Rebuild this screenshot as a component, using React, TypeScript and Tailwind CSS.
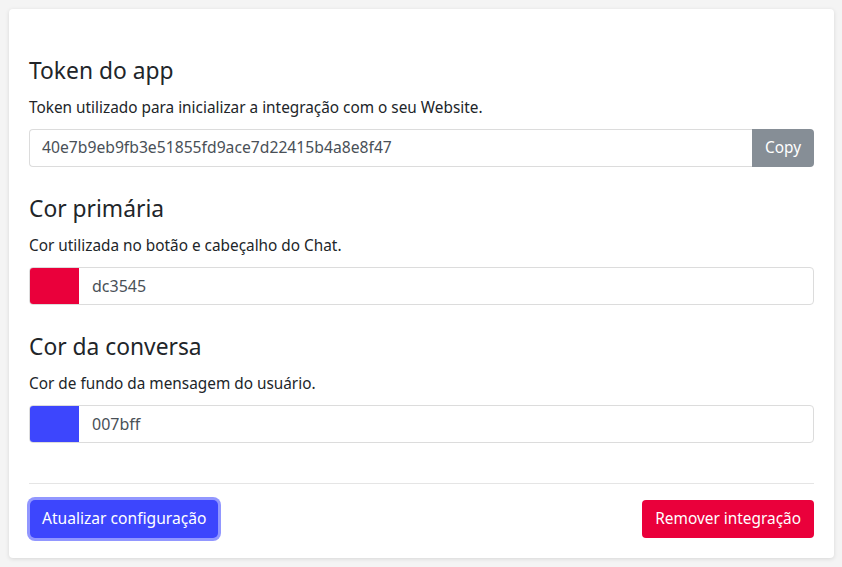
import React from "react";

const font = { fontFamily: '"Noto Sans", "Open Sans", sans-serif' };

function Section({ title, desc, children }: { title: string; desc: string; children: React.ReactNode }) {
  return (
    <div className="flex flex-col">
      <h2 className="text-[22.8px] leading-[29px] text-[#212529] font-normal">{title}</h2>
      <p className="mt-[11px] text-[15.35px] leading-[22px] text-[#212529]">{desc}</p>
      <div className="mt-[11px]">{children}</div>
    </div>
  );
}

function ColorInput({ color, value }: { color: string; value: string }) {
  return (
    <div className="flex h-[38px] rounded border border-[#dcdcdc] overflow-hidden">
      <div className="w-[49px] h-full" style={{ backgroundColor: color }} />
      <div className="flex-1 flex items-center pl-[13px] text-[16px] text-[#495057]">{value}</div>
    </div>
  );
}

export default function App() {
  return (
    <div className="min-h-screen bg-[#f4f4f4] p-[9px]" style={font}>
      <div className="bg-white rounded-[4px] shadow-[0_1px_4px_rgba(0,0,0,0.12)] px-[20px] pt-[47px] pb-[20px] w-[825px]">
        <div className="flex flex-col gap-[27px]">
          <Section title="Token do app" desc="Token utilizado para inicializar a integração com o seu Website.">
            <div className="flex h-[38px]">
              <div className="flex-1 flex items-center border border-[#dcdcdc] border-r-0 rounded-l pl-[12px] text-[15.7px] text-[#495057]">
                40e7b9eb9fb3e51855fd9ace7d22415b4a8e8f47
              </div>
              <button className="w-[62px] h-full bg-[#868e96] text-white text-[15.4px] rounded-r">Copy</button>
            </div>
          </Section>
          <Section title="Cor primária" desc="Cor utilizada no botão e cabeçalho do Chat.">
            <ColorInput color="#ea003b" value="dc3545" />
          </Section>
          <Section title="Cor da conversa" desc="Cor de fundo da mensagem do usuário.">
            <ColorInput color="#3d46fd" value="007bff" />
          </Section>
        </div>
        <div className="mt-[40px] border-t border-[#e5e5e5]" />
        <div className="mt-[16px] flex justify-between items-center">
          <button className="h-[38px] px-[12px] rounded-[5px] bg-[#3d46fd] text-white text-[15.6px] ring-[3px] ring-[#9297ff] ml-[1px]">
            Atualizar configuração
          </button>
          <button className="h-[38px] px-[13px] rounded-[4px] bg-[#ea003b] text-white text-[15.4px]">
            Remover integração
          </button>
        </div>
      </div>
    </div>
  );
}
